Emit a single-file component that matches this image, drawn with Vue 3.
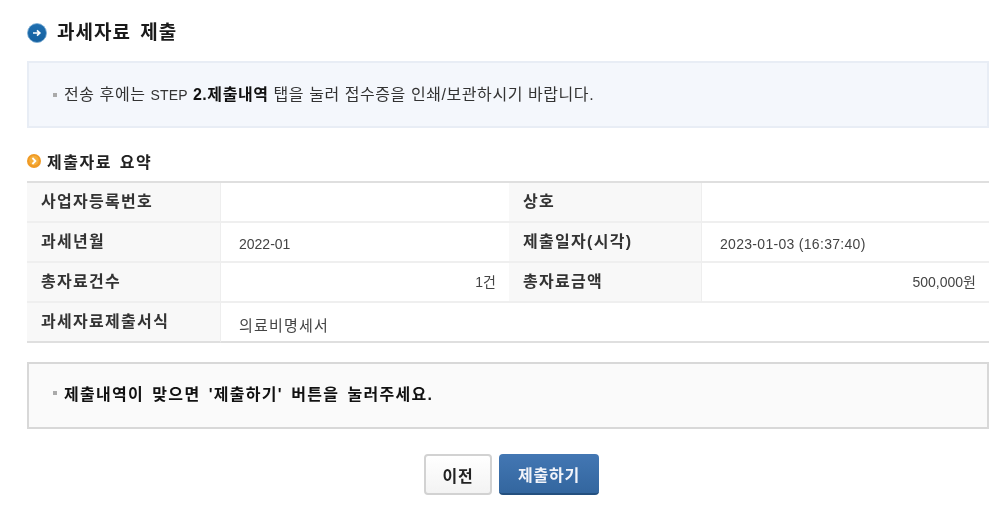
<script setup>
const rows = [
  [{ h: '사업자등록번호' }, { v: '' }, { h: '상호' }, { v: '' }],
  [{ h: '과세년월' }, { v: '2022-01' }, { h: '제출일자(시각)' }, { v: '2023-01-03 (16:37:40)', s: true }],
  [{ h: '총자료건수' }, { v: '1건', r: true }, { h: '총자료금액' }, { v: '500,000원', r: true }],
]
</script>

<template>
  <div class="page">
    <h1 class="title">
      <svg class="ico-blue" width="20" height="20" viewBox="0 0 20 20">
        <defs>
          <linearGradient id="bl" x1="0" y1="0" x2="0" y2="1">
            <stop offset="0" stop-color="#1f6fb0" />
            <stop offset="1" stop-color="#15609f" />
          </linearGradient>
        </defs>
        <circle cx="10" cy="10" r="9.5" fill="url(#bl)" stroke="#7fb0d6" stroke-width="0.8" />
        <path d="M6 10h6.5M10 7.4l2.8 2.6-2.8 2.6" fill="none" stroke="#fff" stroke-width="1.7" />
      </svg>
      <span>과세자료 제출</span>
    </h1>

    <div class="info">
      <i class="dot"></i>
      <span class="msg">전송 후에는 <span class="lat">STEP</span> <b>2.제출내역</b> 탭을 눌러 접수증을 인쇄/보관하시기 바랍니다.</span>
    </div>

    <h2 class="sub">
      <svg width="14" height="14" viewBox="0 0 14 14">
        <circle cx="7" cy="7" r="7" fill="#f09a24" />
        <circle cx="7" cy="6.5" r="4.8" fill="#f5ae3c" />
        <path d="M5.4 4l3 3-3 3" fill="none" stroke="#fff" stroke-width="1.8" />
      </svg>
      <span>제출자료 요약</span>
    </h2>

    <div class="table">
      <template v-for="(row, i) in rows" :key="i">
        <template v-for="(c, j) in row" :key="j">
          <div v-if="c.h" class="th">{{ c.h }}</div>
          <div v-else class="td" :class="{ right: c.r, spaced: c.s }">{{ c.v }}</div>
        </template>
      </template>
      <div class="th last">과세자료제출서식</div>
      <div class="td wide last ko">의료비명세서</div>
    </div>

    <div class="notice">
      <i class="dot"></i>
      <b>제출내역이 맞으면 '제출하기' 버튼을 눌러주세요.</b>
    </div>

    <div class="buttons">
      <button class="btn prev">이전</button>
      <button class="btn submit">제출하기</button>
    </div>
  </div>
</template>

<style>
html, body { margin: 0; background: #fff; }
</style>

<style scoped>
.page {
  width: 962px;
  height: 514px;
  padding-left: 27px;
  overflow: hidden;
  font-family: "Liberation Sans", "Noto Sans CJK KR", sans-serif;
  color: #333;
  filter: blur(0.35px);
}
.title {
  display: flex;
  align-items: center;
  gap: 10px;
  margin: 0;
  padding-top: 23px;
  height: 20px;
  font-size: 19px;
  line-height: 20px;
  font-weight: 700;
  color: #1a1a1a;
  letter-spacing: 1px;
  word-spacing: 3px;
}
.info {
  display: flex;
  align-items: center;
  height: 63px;
  margin-top: 18px;
  padding-left: 24px;
  background: #f4f7fc;
  border: 2px solid #e8edf5;
  font-size: 16px;
  letter-spacing: 0.57px;
  color: #333;
}
.msg { position: relative; top: -2px; }
.lat { font-size: 14px; letter-spacing: 0.2px; }
.info b { color: #111; }
.dot {
  flex: none;
  width: 4px;
  height: 4px;
  margin-right: 7px;
  background: #aaa;
}
.sub {
  display: flex;
  align-items: center;
  gap: 6px;
  margin: 23px 0 0;
  height: 20px;
  font-size: 16px;
  font-weight: 700;
  color: #222;
  letter-spacing: 1.5px;
  word-spacing: 2px;
}
.sub svg { margin-top: -1px; }
.table {
  display: grid;
  grid-template-columns: 194px 288px 193px 287px;
  grid-auto-rows: 40px;
  margin-top: 10px;
  border-top: 2px solid #dfdfdf;
  box-sizing: border-box;
}
.th, .td {
  box-sizing: border-box;
  display: flex;
  align-items: center;
  border-bottom: 2px solid #efefef;
  font-size: 14px;
}
.th {
  padding: 0 0 5px 14px;
  background: #f8f8f8;
  border-right: 1px solid #eeeeee;
  font-size: 16px;
  font-weight: 700;
  color: #333;
  letter-spacing: 1.3px;
}
.td {
  padding: 4px 13px 0 18px;
  background: #fff;
  color: #444;
}
.td.right { justify-content: flex-end; padding-top: 0; padding-bottom: 2px; }
.td.spaced { letter-spacing: 0.3px; }
.td.ko { font-size: 15px; letter-spacing: 1.2px; }
.td.wide { grid-column: span 3; }
.th.last, .td.last { border-bottom-color: #dfdfdf; }
.notice {
  box-sizing: border-box;
  display: flex;
  align-items: center;
  height: 67px;
  margin-top: 19px;
  padding-left: 24px;
  padding-bottom: 5px;
  background: #fafafa;
  border: 2px solid #d8d8d8;
  font-size: 16px;
  color: #111;
  letter-spacing: 1.3px;
  word-spacing: 2.5px;
}
.buttons {
  display: flex;
  justify-content: center;
  gap: 7px;
  margin-top: 25px;
  padding-left: 7px;
}
.btn {
  box-sizing: border-box;
  height: 41px;
  font-family: inherit;
  font-size: 16px;
  font-weight: 700;
  border-radius: 4px;
  letter-spacing: 0.8px;
  padding: 0;
}
.prev {
  width: 68px;
  background: linear-gradient(#fff, #f3f3f3);
  border: 2px solid #d2d2d2;
  color: #222;
}
.submit {
  width: 100px;
  background: linear-gradient(#4377b3, #33669f);
  border: 0;
  border-bottom: 2px solid #24507f;
  color: #f2f4fa;
}
</style>
